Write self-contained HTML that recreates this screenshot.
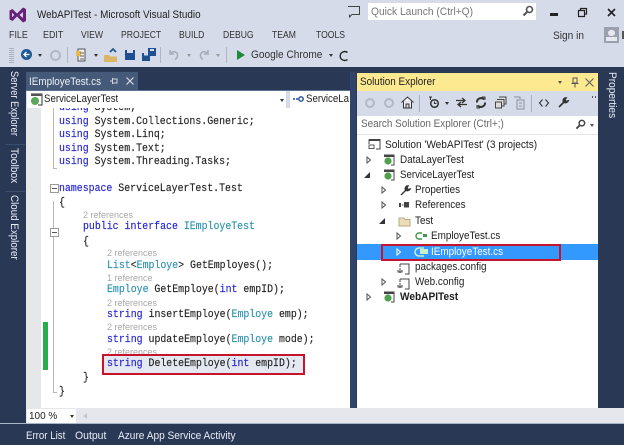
<!DOCTYPE html>
<html><head><meta charset="utf-8">
<style>
html,body{margin:0;padding:0}
body{width:624px;height:445px;overflow:hidden;position:relative;background:#293955;font-family:"Liberation Sans",sans-serif;}
#w{position:absolute;left:0;top:0;width:624px;height:445px;overflow:hidden;filter:blur(.35px)}
.a{position:absolute}
.t{position:absolute;white-space:nowrap;font-size:11px;line-height:14px;color:#1e1e1e;transform-origin:0 50%;transform:scaleX(var(--s,.9))}
.m{position:absolute;white-space:nowrap;font-family:"Liberation Mono",monospace;font-size:10.8px;line-height:14px;color:#222;-webkit-text-stroke:.15px;transform-origin:0 50%;transform:scaleX(.915)}
.k{color:#2222d0}.c{color:#2b91af}
.r{position:absolute;white-space:nowrap;font-size:9px;line-height:11px;color:#a8a8a8}
.v{position:absolute;white-space:nowrap;font-size:11px;line-height:14px;color:#e8ecf4;transform-origin:0 0;transform:rotate(90deg) scaleX(var(--s,.9))}
svg{position:absolute;overflow:visible}
</style></head><body><div id="w">
<div class="a" style="left:0;top:0;width:624px;height:67px;background:#d6dbe9"></div>

<svg style="left:9px;top:6px" width="18" height="18" viewBox="0 0 18 18"><path d="M0.5 4.5L3.5 3L8 7.5L14 1.5L17 3V15L14 16.5L8 10.5L3.5 15L0.5 13.5ZM3 6.8V11.2L5.3 9ZM14 6L10.5 9L14 12Z" fill="#68217a" fill-rule="evenodd"/></svg>
<div class="t" style="left:37px;top:8px;--s:.9">WebAPITest - Microsoft Visual Studio</div>

<div class="t" style="left:9px;top:28px;font-size:10.5px;color:#333;--s:.85">FILE</div>
<div class="t" style="left:43px;top:28px;font-size:10.5px;color:#333;--s:.85">EDIT</div>
<div class="t" style="left:81px;top:28px;font-size:10.5px;color:#333;--s:.82">VIEW</div>
<div class="t" style="left:121px;top:28px;font-size:10.5px;color:#333;--s:.82">PROJECT</div>
<div class="t" style="left:179px;top:28px;font-size:10.5px;color:#333;--s:.82">BUILD</div>
<div class="t" style="left:223px;top:28px;font-size:10.5px;color:#333;--s:.82">DEBUG</div>
<div class="t" style="left:272px;top:28px;font-size:10.5px;color:#333;--s:.82">TEAM</div>
<div class="t" style="left:316px;top:28px;font-size:10.5px;color:#333;--s:.82">TOOLS</div>
<div class="t" style="left:553px;top:29px;color:#333;--s:.92">Sign in</div>
<div class="a" style="left:604px;top:27px;width:15px;height:16px;background:#9aa0ac"></div>
<div class="a" style="left:608px;top:30px;width:7px;height:6px;border-radius:3px;background:#e8e8f0"></div>
<div class="a" style="left:606px;top:37px;width:11px;height:4px;background:#e8e8f0"></div>
<div class="a" style="left:622px;top:31px;width:2px;height:8px;background:#555"></div>

<svg style="left:347px;top:6px" width="14" height="12" viewBox="0 0 14 12"><path d="M1 .5H12.5V8.5H5L2.5 11V8.5" fill="none" stroke="#444" stroke-width="1"/></svg>
<div class="a" style="left:368px;top:3px;width:168px;height:17px;background:#fff"></div>
<div class="t" style="left:371px;top:5px;color:#777;--s:.93">Quick Launch (Ctrl+Q)</div>
<svg style="left:522px;top:5px" width="12" height="12" viewBox="0 0 12 12"><circle cx="7.5" cy="4.5" r="3" fill="none" stroke="#555" stroke-width="1.6"/><path d="M5 7L1.5 10.5" stroke="#555" stroke-width="2"/></svg>
<div class="a" style="left:550px;top:13px;width:8px;height:3px;background:#222"></div>
<svg style="left:578px;top:8px" width="9" height="9" viewBox="0 0 9 9"><path d="M2.5 2.5V.5H8.5V6H6.5M.5 2.5H6.5V8.5H.5Z" fill="none" stroke="#222" stroke-width="1.2"/></svg>
<svg style="left:607px;top:8px" width="9" height="9" viewBox="0 0 9 9"><path d="M1 1L8 8M8 1L1 8" stroke="#222" stroke-width="1.6"/></svg>

<!-- toolbar -->
<div class="a" style="left:9px;top:47px;width:5px;height:16px;background:repeating-linear-gradient(0deg,#aab0bd 0 1px,#d6dbe9 1px 2px)"></div>
<div class="a" style="left:21px;top:49px;width:11px;height:11px;border-radius:50%;background:#1e5a96"></div>
<svg style="left:23px;top:51px" width="7" height="7" viewBox="0 0 7 7"><path d="M6.5 3.5H1.5M3.5 1L1 3.5L3.5 6" stroke="#fff" stroke-width="1.3" fill="none"/></svg>
<div class="a" style="left:38px;top:54px;border:2.5px solid transparent;border-top:3px solid #333;border-bottom:0"></div>
<div class="a" style="left:50px;top:50px;width:7px;height:7px;border-radius:50%;border:2px solid #b4b8c2"></div>
<div class="a" style="left:67px;top:47px;width:1px;height:16px;background:#b0b6c4"></div>
<svg style="left:75px;top:48px" width="13" height="15" viewBox="0 0 13 15"><path d="M3 1H10V13H3Z" fill="#eee" stroke="#555"/><path d="M1 3H6V8H1Z" fill="#e8b94c"/><path d="M5 5H9M5 8H9M5 11H9" stroke="#666"/></svg>
<div class="a" style="left:94px;top:54px;border:2.5px solid transparent;border-top:3px solid #333;border-bottom:0"></div>
<svg style="left:104px;top:48px" width="14" height="15" viewBox="0 0 14 15"><path d="M0 7H5L6.5 8.5H13V14H0Z" fill="#dcb567"/><path d="M6 4L9 1L12 4" stroke="#1e5a96" stroke-width="1.8" fill="none"/></svg>
<div class="a" style="left:125px;top:50px;width:10px;height:10px;background:#1e4f8f"></div>
<div class="a" style="left:127px;top:50px;width:6px;height:3px;background:#d6dbe9"></div>
<svg style="left:142px;top:48px" width="14" height="14" viewBox="0 0 14 14"><path d="M6 0H14V8H6Z" fill="#1e4f8f"/><path d="M0 5H8V13H0Z" fill="#1e4f8f"/><path d="M2 5H6V7.5H2ZM8 1H12V3H8Z" fill="#d6dbe9"/></svg>
<div class="a" style="left:160px;top:47px;width:1px;height:16px;background:#b0b6c4"></div>
<svg style="left:168px;top:49px" width="11" height="11" viewBox="0 0 11 11"><path d="M2 1V5H6M2 5C4 1.5 10 2 9.5 7C9.3 8.5 8.5 9.5 7 10.5" fill="none" stroke="#a8adb8" stroke-width="1.6"/></svg>
<div class="a" style="left:187px;top:54px;border:2.5px solid transparent;border-top:3px solid #999;border-bottom:0"></div>
<svg style="left:199px;top:49px" width="11" height="11" viewBox="0 0 11 11"><path d="M9 1V5H5M9 5C7 1.5 1 2 1.5 7C1.7 8.5 2.5 9.5 4 10.5" fill="none" stroke="#a8adb8" stroke-width="1.6"/></svg>
<div class="a" style="left:216px;top:54px;border:2.5px solid transparent;border-top:3px solid #999;border-bottom:0"></div>
<div class="a" style="left:226px;top:47px;width:1px;height:16px;background:#b0b6c4"></div>
<div class="a" style="left:237px;top:50px;border:5px solid transparent;border-left:8px solid #1f8a3a;border-right:0"></div>
<div class="t" style="left:251px;top:48px;color:#333;--s:.92">Google Chrome</div>
<div class="a" style="left:329px;top:54px;border:2.5px solid transparent;border-top:3px solid #333;border-bottom:0"></div>
<svg style="left:339px;top:49px" width="11" height="13" viewBox="0 0 11 13"><path d="M8.5 3.5A4.5 4.5 0 1 0 8.5 10.5" fill="none" stroke="#222" stroke-width="1.4"/></svg>

<!-- left side rail -->
<div class="v" style="left:21px;top:71px;--s:.85">Server Explorer</div>
<div class="a" style="left:5px;top:144px;width:20px;height:1px;background:#3a4c6c"></div>
<div class="v" style="left:21px;top:148px;--s:.93">Toolbox</div>
<div class="a" style="left:5px;top:191px;width:20px;height:1px;background:#3a4c6c"></div>
<div class="v" style="left:21px;top:195px;--s:.89">Cloud Explorer</div>

<!-- document tab -->
<div class="a" style="left:26px;top:72px;width:112px;height:18px;background:#445a78"></div>
<div class="t" style="left:29px;top:75px;color:#eef1f6">IEmployeTest.cs</div>
<svg style="left:110px;top:77px" width="8" height="8" viewBox="0 0 8 8"><path d="M2.5 1V7M2.5 2H7V6H2.5M0 4H2.5" stroke="#cfd6e2" fill="none"/></svg>
<svg style="left:126px;top:77px" width="8" height="8" viewBox="0 0 8 8"><path d="M.5 .5L7.5 7.5M7.5 .5L.5 7.5" stroke="#d6dce8" stroke-width="1.2"/></svg>
<div class="a" style="left:26px;top:90px;width:324px;height:2px;background:#5d7390"></div>

<!-- nav bar -->
<div class="a" style="left:26px;top:91px;width:324px;height:18px;background:#d6dbe9"></div>
<div class="a" style="left:27px;top:91px;width:259px;height:17px;background:#fff"></div>
<div class="a" style="left:290px;top:91px;width:60px;height:17px;background:#fff"></div>
<svg style="left:30px;top:93px" width="13" height="13" viewBox="0 0 13 13"><path d="M1 1H12V12H8" fill="none" stroke="#333"/><path d="M1 1H12V3H1Z" fill="#555"/><circle cx="5" cy="8" r="4" fill="#5aa85a"/></svg>
<div class="t" style="left:44px;top:92px;--s:.88">ServiceLayerTest</div>
<div class="a" style="left:280px;top:99px;border:2.5px solid transparent;border-top:3px solid #333;border-bottom:0"></div>
<svg style="left:293px;top:95px" width="11" height="8" viewBox="0 0 11 8"><path d="M0 4H6" stroke="#1e4f8f" stroke-width="1.5" stroke-dasharray="2 1"/><circle cx="8" cy="4" r="2.2" fill="none" stroke="#1e4f8f" stroke-width="1.4"/></svg>
<div class="t" style="left:306px;top:92px;width:49px;overflow:hidden;--s:.88">ServiceLayerTest</div>

<!-- editor -->
<div class="a" style="left:26px;top:108px;width:324px;height:300px;background:#fff;overflow:hidden">
  <div class="a" style="left:0;top:0;width:15px;height:300px;background:#e6e7e8"></div>
  <div class="a" style="left:17px;top:214px;width:5px;height:48px;background:#27b04a"></div>
  <div class="a" style="left:27px;top:0;width:1px;height:60px;background:#b8b8b8"></div>
  <div class="a" style="left:27px;top:60px;width:4px;height:1px;background:#b8b8b8"></div>
  <div class="a" style="left:27px;top:93px;width:1px;height:191px;background:#b8b8b8"></div>
  <div class="a" style="left:27px;top:284px;width:4px;height:1px;background:#b8b8b8"></div>
  <div class="a" style="left:24px;top:76px;width:7px;height:7px;border:1px solid #999;background:#fff"></div>
  <div class="a" style="left:26px;top:80px;width:5px;height:1px;background:#555"></div>
  <div class="a" style="left:24px;top:120px;width:7px;height:7px;border:1px solid #999;background:#fff"></div>
  <div class="a" style="left:26px;top:124px;width:5px;height:1px;background:#555"></div>
</div>
<div class="m" style="left:59px;top:101px;clip-path:inset(7px 0 0 0)"><span class="k">using</span> System;</div>
<div class="m" style="left:59px;top:115px"><span class="k">using</span> System.Collections.Generic;</div>
<div class="m" style="left:59px;top:128px"><span class="k">using</span> System.Linq;</div>
<div class="m" style="left:59px;top:142px"><span class="k">using</span> System.Text;</div>
<div class="m" style="left:59px;top:155px"><span class="k">using</span> System.Threading.Tasks;</div>
<div class="m" style="left:59px;top:182px"><span class="k">namespace</span> ServiceLayerTest.Test</div>
<div class="m" style="left:59px;top:196px">{</div>
<div class="r" style="left:83px;top:210px">2 references</div>
<div class="m" style="left:83px;top:220px"><span class="k">public</span> <span class="k">interface</span> <span class="c">IEmployeTest</span></div>
<div class="m" style="left:83px;top:235px">{</div>
<div class="r" style="left:107px;top:248px">2 references</div>
<div class="m" style="left:107px;top:259px"><span class="c">List</span>&lt;<span class="c">Employe</span>&gt; GetEmployes();</div>
<div class="r" style="left:107px;top:273px">1 reference</div>
<div class="m" style="left:107px;top:283px"><span class="c">Employe</span> GetEmploye(<span class="k">int</span> empID);</div>
<div class="r" style="left:107px;top:298px">2 references</div>
<div class="m" style="left:107px;top:308px"><span class="k">string</span> insertEmploye(<span class="c">Employe</span> emp);</div>
<div class="r" style="left:107px;top:322px">2 references</div>
<div class="m" style="left:107px;top:333px"><span class="k">string</span> updateEmploye(<span class="c">Employe</span> mode);</div>
<div class="r" style="left:107px;top:347px">2 references</div>
<div class="a" style="left:103px;top:355px;width:200px;height:18px;background:#e4e8f0"></div>
<div class="m" style="left:107px;top:357px"><span class="k">string</span> DeleteEmploye(<span class="k">int</span> empID);</div>
<div class="a" style="left:102px;top:354px;width:199px;height:17px;border:2px solid #c8132c"></div>
<div class="m" style="left:83px;top:371px">}</div>
<div class="m" style="left:59px;top:385px">}</div>

<!-- bottom strip -->
<div class="a" style="left:26px;top:408px;width:598px;height:15px;background:#e6e7ed"></div>
<div class="a" style="left:27px;top:409px;width:49px;height:14px;background:#fff"></div>
<div class="t" style="left:29px;top:409px;font-size:10.5px;color:#222;--s:.95">100 %</div>
<div class="a" style="left:70px;top:415px;border:2.5px solid transparent;border-top:3px solid #333;border-bottom:0"></div>
<div class="a" style="left:83px;top:413px;border:3px solid transparent;border-right:4px solid #c4c6cc;border-left:0"></div>
<div class="a" style="left:0;top:423px;width:624px;height:1px;background:#a8b4c8"></div>
<div class="t" style="left:26px;top:429px;color:#e8ecf4;--s:.88">Error List</div>
<div class="t" style="left:75px;top:429px;color:#e8ecf4;--s:.95">Output</div>
<div class="t" style="left:118px;top:429px;color:#e8ecf4;--s:.92">Azure App Service Activity</div>

<!-- solution explorer -->
<div class="a" style="left:357px;top:73px;width:241px;height:335px;background:#fff"></div>
<div class="a" style="left:357px;top:73px;width:241px;height:18px;background:#fdea90"></div>
<div class="t" style="left:360px;top:75px">Solution Explorer</div>
<div class="a" style="left:558px;top:81px;border:2.5px solid transparent;border-top:3px solid #555;border-bottom:0"></div>
<svg style="left:571px;top:77px" width="8" height="11" viewBox="0 0 8 11"><path d="M2 1H6V6H2ZM.5 6.5H7.500M4 6.500V10.500" stroke="#555" fill="none"/></svg>
<svg style="left:585px;top:78px" width="9" height="9" viewBox="0 0 9 9"><path d="M.5 .5L8.5 8.5M8.5 .5L.5 8.5" stroke="#666" stroke-width="1.2"/></svg>
<div class="a" style="left:357px;top:91px;width:241px;height:25px;background:#d6dbe9"></div>
<div class="a" style="left:365px;top:98px;width:6px;height:6px;border-radius:50%;border:2.5px solid #b4b8c2"></div>
<div class="a" style="left:384px;top:98px;width:6px;height:6px;border-radius:50%;border:2.5px solid #b4b8c2"></div>
<svg style="left:401px;top:96px" width="13" height="13" viewBox="0 0 13 13"><path d="M.5 6.5L6.5 1L12.5 6.5M2.5 5.5V12H10.5V5.5M5 12V8H8V12" fill="#f3f3f3" stroke="#333"/></svg>
<div class="a" style="left:419px;top:95px;width:1px;height:17px;background:#aab0bd"></div>
<svg style="left:428px;top:96px" width="12" height="13" viewBox="0 0 12 13"><circle cx="6.5" cy="7.5" r="3.8" fill="none" stroke="#333" stroke-width="1.5"/><path d="M1 1H4M2.5 1V4M6.5 5.5V7.500H8.500" stroke="#333" fill="none"/></svg>
<div class="a" style="left:445px;top:102px;border:2.5px solid transparent;border-top:3px solid #333;border-bottom:0"></div>
<svg style="left:456px;top:97px" width="11" height="11" viewBox="0 0 11 11"><path d="M0 3.5H8M6 1L9 3.5L6 6M11 7.5H3M5 5L2 7.5L5 10" fill="none" stroke="#333" stroke-width="1.3"/></svg>
<svg style="left:475px;top:96px" width="12" height="13" viewBox="0 0 12 13"><path d="M2 6.5A4 4 0 0 1 9 3.5M10 6.5A4 4 0 0 1 3 9.5" fill="none" stroke="#333" stroke-width="2"/><path d="M7 1H10V4M5 12H2V9" fill="none" stroke="#333"/></svg>
<svg style="left:495px;top:96px" width="12" height="13" viewBox="0 0 12 13"><path d="M4 1H11V8H9M2 3.5H9V10H7M.5 6H6.5V12H.5Z" fill="#ddd" stroke="#444"/></svg>
<svg style="left:513px;top:96px" width="12" height="14" viewBox="0 0 12 14"><path d="M1 1H7V3M4 4H11V13H4ZM6 7H9M6 10H9" fill="none" stroke="#8a8f99"/></svg>
<div class="a" style="left:531px;top:95px;width:1px;height:17px;background:#aab0bd"></div>
<svg style="left:539px;top:99px" width="10" height="8" viewBox="0 0 10 8"><path d="M3.5 .5L.5 4L3.5 7.5M6.5 .5L9.5 4L6.5 7.5" fill="none" stroke="#333" stroke-width="1.1"/></svg>
<svg style="left:558px;top:97px" width="11" height="11" viewBox="0 0 11 11"><path d="M1 10L6 5M7 1A3 3 0 0 0 5.5 5A3 3 0 0 0 10 4L8 4.5L6.8 3L8 1Z" fill="#333" stroke="#333" stroke-width="1.6"/></svg>
<div class="a" style="left:592px;top:96px;width:1px;height:2px;background:#555"></div>
<div class="a" style="left:595px;top:96px;width:1px;height:2px;background:#555"></div>
<div class="a" style="left:357px;top:116px;width:241px;height:18px;background:#fff"></div>
<div class="t" style="left:361px;top:117px;color:#666">Search Solution Explorer (Ctrl+;)</div>
<svg style="left:575px;top:119px" width="11" height="11" viewBox="0 0 12 12"><circle cx="7.5" cy="4.5" r="3" fill="none" stroke="#444" stroke-width="1.6"/><path d="M5 7L1.5 10.5" stroke="#444" stroke-width="2"/></svg>
<div class="a" style="left:590px;top:124px;border:2px solid transparent;border-top:3px solid #555;border-bottom:0"></div>
<div class="a" style="left:357px;top:134px;width:241px;height:1px;background:#e4e6ec"></div>

<div class="a" style="left:357px;top:244px;width:241px;height:16px;background:#3399ff"></div>

<svg style="left:368px;top:139px" width="13" height="11" viewBox="0 0 13 11"><path d="M1 .5H12V10H8M1 .5V5" fill="none" stroke="#444"/><path d="M1 .5H12V2H1Z" fill="#444"/><path d="M1 6H6V9.5H1Z" fill="none" stroke="#555"/></svg>
<div class="t" style="left:385px;top:138px;--s:.92">Solution 'WebAPITest' (3 projects)</div>

<svg style="left:0;top:0" width="624" height="445" viewBox="0 0 624 445">
  <g fill="none" stroke="#555"><path d="M367 157V163L370.500 160Z"/><path d="M382 187V193L385.500 190Z"/><path d="M382 202V208L385.500 205Z"/><path d="M397 233V239L400.500 236Z"/><path d="M397 249V255L400.500 252Z" stroke="#fff"/><path d="M382 279V285L385.500 282Z"/><path d="M367 294V300L370.500 297Z"/></g>
  <path d="M370 172V178H364Z" fill="#333"/><path d="M385 218V224H379Z" fill="#333"/>
  <g>
   <path d="M384 155H394V165H391" fill="none" stroke="#444"/><path d="M384 155H394V157H384Z" fill="#444"/><circle cx="388" cy="161" r="3.600" fill="#4fa04f"/>
   <path d="M384 170H394V180H391" fill="none" stroke="#444"/><path d="M384 170H394V172H384Z" fill="#444"/><circle cx="388" cy="176" r="3.600" fill="#4fa04f"/>
   <path d="M384 292H394V302H391" fill="none" stroke="#444"/><path d="M384 292H394V294H384Z" fill="#444"/><circle cx="388" cy="298" r="3.600" fill="#4fa04f"/>
  </g>
  <path d="M401 195L406 190M407 186A3 3 0 0 0 405.500 190A3 3 0 0 0 410 189L408 189.500L406.800 188L408 186Z" fill="#333" stroke="#333" stroke-width="1.400"/>
  <path d="M399 203H401V207H399ZM402 204.500H403.500V205.500H402Z" fill="#444"/><rect x="404" y="202" width="5" height="5.500" fill="#444"/>
  <path d="M399 218H404L405 219.500H410V226H399Z" fill="#ecdcb8" stroke="#b8a884"/>
  <path d="M422 233H419A3 3 0 0 0 419 239H422" fill="none" stroke="#3d9a4a" stroke-width="1.400"/><rect x="423" y="234" width="4" height="3" fill="#3d9a4a"/>
  <path d="M424 248H419A4 4 0 0 0 419 256H424" fill="none" stroke="#c8f0d0" stroke-width="1.500"/><rect x="420" y="249" width="8" height="5" fill="#c8f0d0"/>
  <path d="M400 264H409V274H405M400 264V267M400 268V273M398 270V272H402V270" fill="none" stroke="#444"/>
  <path d="M400 279H409V289H405M400 279V282M400 283V288M398 285V287H402V285" fill="none" stroke="#444"/>
</svg>

<div class="t" style="left:400px;top:153px">DataLayerTest</div>
<div class="t" style="left:400px;top:168px;--s:.88">ServiceLayerTest</div>
<div class="t" style="left:415px;top:183px">Properties</div>
<div class="t" style="left:415px;top:198px">References</div>
<div class="t" style="left:415px;top:214px">Test</div>
<div class="t" style="left:431px;top:229px">EmployeTest.cs</div>
<div class="t" style="left:431px;top:245px;color:#fff">IEmployeTest.cs</div>
<div class="t" style="left:415px;top:260px">packages.config</div>
<div class="t" style="left:415px;top:275px">Web.config</div>
<div class="t" style="left:400px;top:290px;font-weight:bold;--s:.92">WebAPITest</div>
<div class="a" style="left:381px;top:244px;width:176px;height:13px;border:2px solid #c8132c"></div>

<!-- right rail -->
<div class="v" style="left:619px;top:72px;color:#e8ecf4;--s:.92">Properties</div>
<div class="a" style="left:350px;top:72px;width:6px;height:336px;background:#2f4468"></div>
</div></body></html>
